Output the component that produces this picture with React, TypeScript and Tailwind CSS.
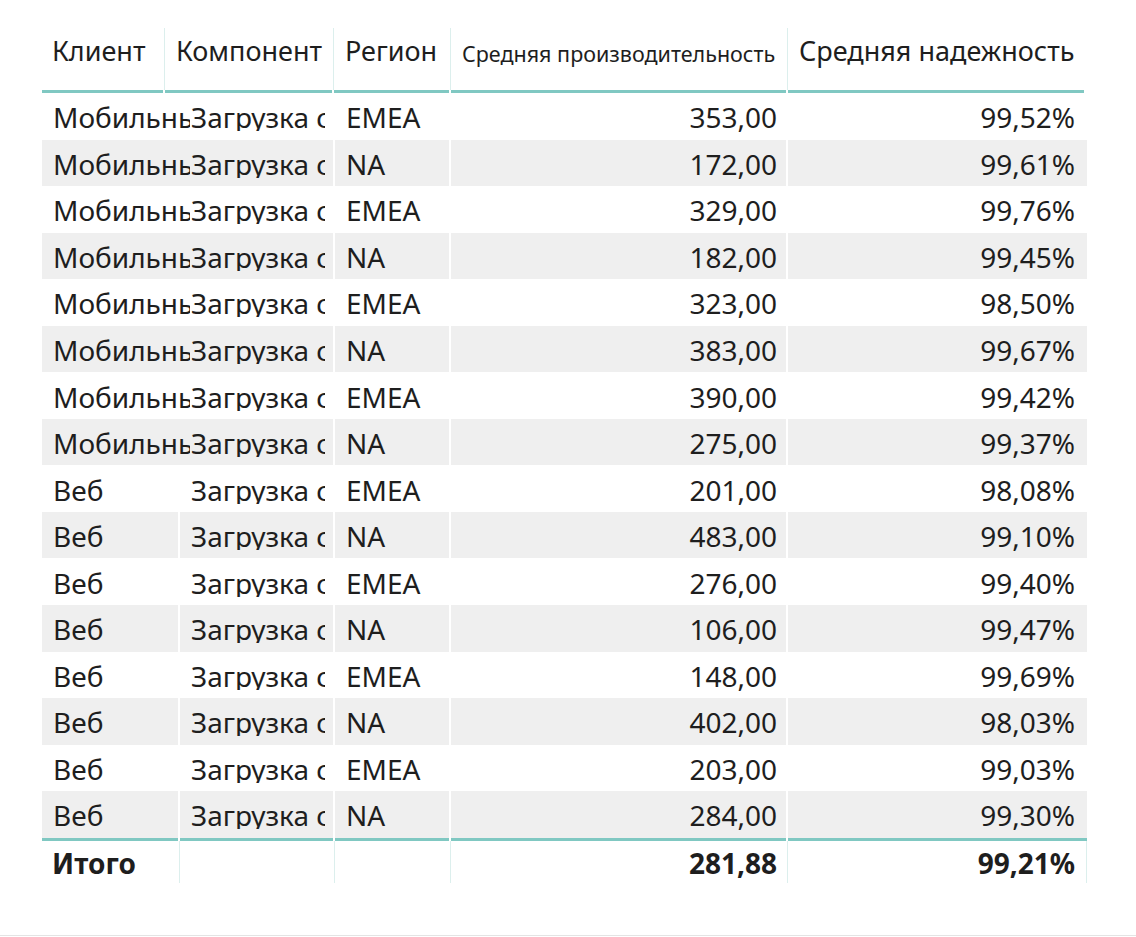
const rows = [
  { client: 'Мобильный клиент', region: 'EMEA', perf: '353,00', rel: '99,52%' },
  { client: 'Мобильный клиент', region: 'NA', perf: '172,00', rel: '99,61%' },
  { client: 'Мобильный клиент', region: 'EMEA', perf: '329,00', rel: '99,76%' },
  { client: 'Мобильный клиент', region: 'NA', perf: '182,00', rel: '99,45%' },
  { client: 'Мобильный клиент', region: 'EMEA', perf: '323,00', rel: '98,50%' },
  { client: 'Мобильный клиент', region: 'NA', perf: '383,00', rel: '99,67%' },
  { client: 'Мобильный клиент', region: 'EMEA', perf: '390,00', rel: '99,42%' },
  { client: 'Мобильный клиент', region: 'NA', perf: '275,00', rel: '99,37%' },
  { client: 'Веб', region: 'EMEA', perf: '201,00', rel: '98,08%' },
  { client: 'Веб', region: 'NA', perf: '483,00', rel: '99,10%' },
  { client: 'Веб', region: 'EMEA', perf: '276,00', rel: '99,40%' },
  { client: 'Веб', region: 'NA', perf: '106,00', rel: '99,47%' },
  { client: 'Веб', region: 'EMEA', perf: '148,00', rel: '99,69%' },
  { client: 'Веб', region: 'NA', perf: '402,00', rel: '98,03%' },
  { client: 'Веб', region: 'EMEA', perf: '203,00', rel: '99,03%' },
  { client: 'Веб', region: 'NA', perf: '284,00', rel: '99,30%' },
];

const headers = [
  { label: 'Клиент', small: false },
  { label: 'Компонент', small: false },
  { label: 'Регион', small: false },
  { label: 'Средняя производительность', small: true },
  { label: 'Средняя надежность', small: false },
];

function HeaderCell({ label, small, right, first }: { label: string; small: boolean; right?: boolean; first?: boolean }) {
  return (
    <div className="flex flex-col">
      <div className={`flex-1 flex items-end pb-[26px] ${first ? 'pl-[10px]' : 'pl-[11px]'} ${right ? '' : 'border-r border-[#dcefed]'}`}>
        <span className={`whitespace-nowrap leading-none ${small ? 'text-[21.5px]' : 'text-[27px]'}`}>{label}</span>
      </div>
      <div className="h-[3px] bg-[#80c8c2] mr-[2px]" />
    </div>
  );
}

export default function App() {
  return (
    <div
      className="w-[1136px] h-[937px] bg-white flex flex-col text-[#1e1e1e] overflow-hidden"
      style={{ fontFamily: '"Noto Sans", "Open Sans", sans-serif' }}
    >
      <div className="pt-[28px] pl-[42px] w-[1087px]">
        {/* header: Power BI draws these dividers slightly off from the body columns */}
        <div className="grid grid-cols-[123px_169px_117px_337px_298px] h-[65px]">
          {headers.map((h, i) => (
            <HeaderCell key={h.label} label={h.label} small={h.small} first={i === 0} right={i === headers.length - 1} />
          ))}
        </div>

        {rows.map((r, i) => {
          const gray = i % 2 === 1;
          const fits = r.client === 'Веб';
          return (
            <div
              key={i}
              className={`grid grid-cols-[138px_155px_116px_337px_299px] h-[46.56px] text-[28px] leading-none ${gray ? 'bg-[#efefef]' : 'bg-white'}`}
            >
              <div className={`flex items-center pt-[2px] pl-[11px] ${fits ? 'border-r-2 border-white' : ''}`}>
                <span className="block w-[137px] shrink-0 overflow-hidden whitespace-nowrap">{r.client}</span>
              </div>
              <div className="flex items-center pt-[2px] pl-[11px] border-r-2 border-white">
                <span className="block w-[134px] overflow-hidden whitespace-nowrap">Загрузка страницы</span>
              </div>
              <div className="flex items-center pt-[2px] pl-[11px] border-r-2 border-white">{r.region}</div>
              <div className="flex items-center justify-end pt-[2px] pr-[9px] border-r-2 border-white">{r.perf}</div>
              <div className="flex items-center justify-end pt-[2px] pr-[12px]">{r.rel}</div>
            </div>
          );
        })}

        <div className="grid grid-cols-[138px_155px_116px_337px_299px] text-[28px] leading-none font-bold">
          <div className="h-[3px] bg-[#80c8c2] mr-[2px]" />
          <div className="h-[3px] bg-[#80c8c2] mr-[2px]" />
          <div className="h-[3px] bg-[#80c8c2] mr-[2px]" />
          <div className="h-[3px] bg-[#80c8c2] mr-[2px]" />
          <div className="h-[3px] bg-[#80c8c2]" />
          <div className="h-[42px] flex items-center pt-[2px] pl-[10px] border-r border-[#dcefed]">Итого</div>
          <div className="h-[42px] border-r border-[#dcefed]" />
          <div className="h-[42px] border-r border-[#dcefed]" />
          <div className="h-[42px] flex items-center justify-end pt-[2px] pr-[10px] border-r border-[#dcefed]">281,88</div>
          <div className="h-[42px] flex items-center justify-end pt-[2px] pr-[11px] border-r border-[#dcefed]">99,21%</div>
        </div>
      </div>
      <div className="flex-1" />
      <div className="h-[2px] border-t border-[#e4e4e4]" />
    </div>
  );
}
